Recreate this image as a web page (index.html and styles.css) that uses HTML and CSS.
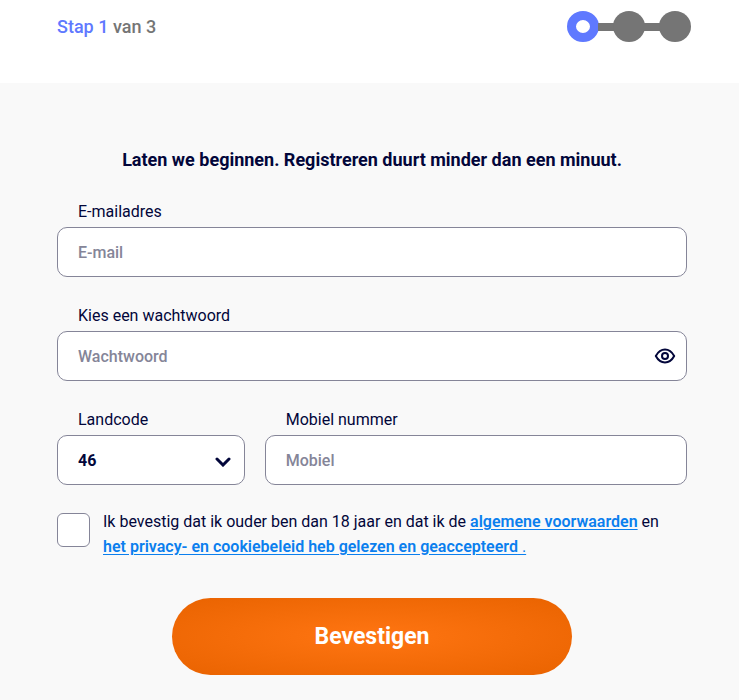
FILE: index.html
```html
<!DOCTYPE html>
<html lang="nl">
<head>
    <meta charset="UTF-8">
    <meta name="viewport" content="width=device-width, initial-scale=1.0">
    <title>Registreren</title>
    <link rel="stylesheet" href="styles.css">
</head>
<body>
    <header class="header">
        <div class="step-text"><span class="step-current">Stap 1</span> van 3</div>
        <div class="steps">
            <span class="dot active"></span>
            <span class="line"></span>
            <span class="dot"></span>
            <span class="line"></span>
            <span class="dot"></span>
        </div>
    </header>
    <main class="content">
        <h1>Laten we beginnen. Registreren duurt minder dan een minuut.</h1>
        <form class="form">
            <div class="input-group">
                <label for="email">E-mailadres</label>
                <input type="email" id="email" placeholder="E-mail">
            </div>
            <div class="input-group">
                <label for="password">Kies een wachtwoord</label>
                <div class="control">
                    <input type="password" id="password" placeholder="Wachtwoord">
                    <button type="button" class="toggle-btn" aria-label="Toon wachtwoord">
                        <svg width="22" height="18" viewBox="0 0 22 18" fill="none" stroke="#02063a" stroke-width="2">
                            <path d="M1.8 9C4 5 7 2.500 11 2.500S18 5 20.200 9C18 13 15 15.500 11 15.500S4 13 1.800 9Z" stroke-linejoin="round"/>
                            <circle cx="11" cy="9" r="3"/>
                        </svg>
                    </button>
                </div>
            </div>
            <div class="phone-row">
                <div class="input-group">
                    <label for="code">Landcode</label>
                    <div class="control">
                        <select id="code">
                            <option>46</option>
                        </select>
                        <svg class="chevron" width="16" height="10" viewBox="0 0 16 10" fill="none" stroke="#02063a" stroke-width="3">
                            <path d="M2 2L8 8L14 2" stroke-linecap="round"/>
                        </svg>
                    </div>
                </div>
                <div class="input-group">
                    <label for="mobile">Mobiel nummer</label>
                    <input type="tel" id="mobile" placeholder="Mobiel">
                </div>
            </div>
            <div class="terms">
                <input type="checkbox" id="terms">
                <label for="terms">Ik bevestig dat ik ouder ben dan 18 jaar en dat ik de <a href="#"><b>algemene voorwaarden</b></a> en <br><a href="#"><b>het privacy- en cookiebeleid heb gelezen en geaccepteerd</b> .</a></label>
            </div>
            <button type="submit" class="submit-btn">Bevestigen</button>
        </form>
    </main>
</body>
</html>
```
FILE: styles.css
```css
* {
    box-sizing: border-box;
}
body {
    margin: 0;
    min-height: 100vh;
    display: flex;
    flex-direction: column;
    font-family: Roboto, sans-serif;
    font-size: 16px;
    color: #02063a;
    background: #fff;
}
.header {
    display: flex;
    justify-content: space-between;
    padding: 11px 48px 41px 57px;
}
.step-text {
    font-size: 18px;
    line-height: 31px;
    font-weight: 500;
    color: #757575;
}
.step-current {
    color: #5f79ff;
}
.steps {
    display: flex;
    align-items: center;
}
.dot {
    width: 32px;
    height: 31px;
    border-radius: 50%;
    background: #757575;
}
.dot.active {
    background: #fff;
    border: 9px solid #5f79ff;
}
.line {
    width: 16px;
    height: 8px;
    margin: 0 -1px;
    background: #757575;
}
.content {
    flex: 1;
    padding: 64px 52px 25px 57px;
    background: #f9f9f9;
}
h1 {
    margin: 0 0 24px;
    font-size: 18px;
    line-height: 26px;
    font-weight: 700;
    text-align: center;
}
.form {
    display: flex;
    flex-direction: column;
    gap: 24px;
}
.input-group label {
    display: block;
    padding-left: 21px;
    line-height: 30px;
}
.input-group input,
.input-group select {
    display: block;
    width: 100%;
    height: 50px;
    padding: 0 20px;
    border: 1px solid #858598;
    border-radius: 10px;
    background: #fff;
    font-family: inherit;
    font-size: 16px;
    font-weight: 500;
    color: #02063a;
}
.input-group select {
    appearance: none;
    font-weight: 700;
}
.input-group input::placeholder {
    color: #858598;
    opacity: 1;
}
.control {
    position: relative;
}
.toggle-btn {
    position: absolute;
    top: 16px;
    right: 11px;
    display: flex;
    padding: 0;
    border: none;
    background: none;
    cursor: pointer;
}
.chevron {
    position: absolute;
    top: 22px;
    right: 14px;
    pointer-events: none;
}
.phone-row {
    display: grid;
    grid-template-columns: 4fr 9fr;
    gap: 20px;
}
.terms {
    display: flex;
    align-items: flex-start;
    gap: 13px;
    line-height: 25px;
}
.terms input {
    appearance: none;
    flex: none;
    width: 33px;
    height: 34px;
    margin: 4px 0 0;
    border: 1px solid #858598;
    border-radius: 6px;
    background: #fff;
}
.terms input:checked {
    background: #5f79ff;
}
.terms a {
    color: #0b7fee;
    text-underline-offset: 2px;
}
.terms b {
    font-weight: 600;
}
.submit-btn {
    width: 100%;
    max-width: 400px;
    height: 77px;
    margin: 15px auto 0;
    border: none;
    border-radius: 39px;
    background: radial-gradient(#ff7512, #e96300);
    font-family: inherit;
    font-size: 23px;
    font-weight: 700;
    color: #fff;
    cursor: pointer;
}
```
